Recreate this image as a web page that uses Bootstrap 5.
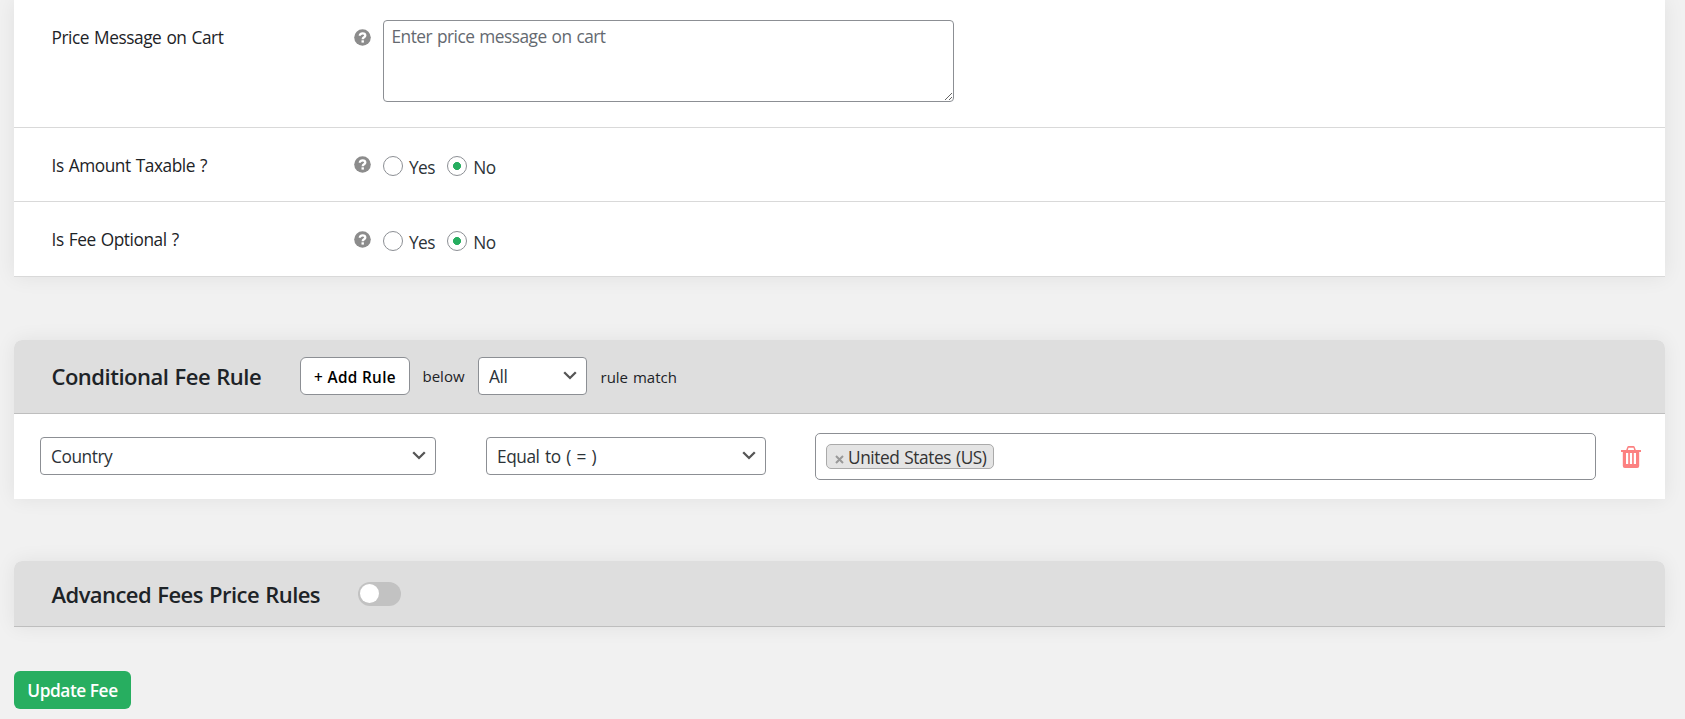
<!DOCTYPE html>
<html lang="en">
<head>
<meta charset="utf-8">
<meta name="viewport" content="width=device-width, initial-scale=1">
<title>Edit fee</title>
<link href="https://cdn.jsdelivr.net/npm/bootstrap@5.3.0/dist/css/bootstrap.min.css" rel="stylesheet">
<style>
  body { background: #f1f1f1; color: #1d2327; font-family: "Open Sans", "Noto Sans", sans-serif; font-size: 17.3px; line-height: 24px; letter-spacing: -.45px; word-spacing: 1px; overflow: hidden; }
  .page { padding: 0 20px 0 14px; }
  .panel { background: #fff; box-shadow: 0 0 20px rgba(0,0,0,.07); }
  .panel-head { background: #dedede; border-bottom: 1px solid #bebebe; border-radius: 8px 8px 0 0; padding-left: 37.5px; }
  .field { border-bottom: 1px solid #d9d9d9; padding-left: 37.5px; }
  .field-label { width: 302.5px; padding-top: 2px; }
  .help { width: 17px; height: 17px; margin-right: 12px; flex: none; }
  .message { width: 571px; height: 82px; padding: 3px 7.5px; border: 1px solid #8c8f94; border-radius: 4px; font-size: 17.3px; line-height: 25px; letter-spacing: -.52px; word-spacing: 1px; }
  .message::placeholder { color: #646970; }
  .choice { color: #2c3338; gap: 6px; }
  .choice span { padding-top: 2px; margin-bottom: -1px; letter-spacing: -.6px; }
  .choice + .choice { margin-left: 12.500px; }
  .choice .form-check-input { width: 20px; height: 20px; margin: 0; border: 1px solid #8c8f94; background-color: #fff; }
  .choice .form-check-input:checked { background-image: radial-gradient(circle, #27ae60 3.7px, transparent 4.3px); }
  .panel-title { font-size: 22px; font-weight: 600; line-height: 30px; letter-spacing: -.5px; margin: 0; }
  .form-select { height: 38px; padding: 3px 30px 0 10px; border: 1px solid #8c8f94; border-radius: 4px; color: #2c3338; font-size: 17.3px; line-height: 24px; letter-spacing: -.45px; word-spacing: 1.500px;
    background: #fff url("data:image/svg+xml,%3Csvg xmlns='http://www.w3.org/2000/svg' viewBox='0 0 14 9'%3E%3Cpath d='M1.2 1.3 7 7l5.800-5.700' fill='none' stroke='%23555' stroke-width='2.300'/%3E%3C/svg%3E") no-repeat right 9px center / 14px 9px; }
  .btn-rule { width: 110px; height: 38px; padding: 3px 0 0; background: #fff; border: 1px solid #8c8f94; border-radius: 6px; color: #000; font-size: 15.3px; font-weight: 600; letter-spacing: .35px; }
  .hint { font-size: 15px; letter-spacing: 0; }
  .values { width: 781px; height: 47px; border: 1px solid #8c8f94; border-radius: 5px; padding-left: 10px; }
  .tag { width: 168px; height: 25px; background: #e4e4e4; border: 1px solid #aaa; border-radius: 5px; color: #333; padding-left: 8px; line-height: 25px; }
  .tag svg { width: 9px; height: 9px; margin-right: 4px; margin-top: 5px; }
  .tag span { padding-top: 2px; letter-spacing: -.45px; }
  .trash { width: 20px; height: 22px; }
  .toggle { width: 43px; height: 24px; border-radius: 12px; background: #c2c2c2; padding: 2px; }
  .knob { width: 19px; height: 19px; border-radius: 50%; background: #fff; }
  .btn-save { width: 117px; height: 38px; padding: 2px 0 0; background: #27ae60; color: #fff; border: 0; border-radius: 6px; font-size: 17.3px; font-weight: 600; letter-spacing: -.45px; }
  .btn-save:hover { background: #219653; color: #fff; }
</style>
</head>
<body>
<svg class="d-none" xmlns="http://www.w3.org/2000/svg">
  <symbol id="help" viewBox="0 0 17 17"><circle cx="8.500" cy="8.500" r="8.300" fill="#8c8c8c"/><path d="M5.800 6.700C5.800 3.600 11.300 3.800 11.300 6.600 11.300 8.400 8.700 8.200 8.700 10.300" fill="none" stroke="#fff" stroke-width="2.300"/><rect x="7.500" y="11.300" width="2.400" height="2.300" fill="#fff"/></symbol>
</svg>
<main class="page">
  <section class="panel">
    <div class="field d-flex align-items-start" style="height:128px">
      <div class="field-label" style="padding-top:26px"><label for="msg" class="d-block">Price Message on Cart</label></div>
      <svg class="help" style="margin-top:29px"><use href="#help"/></svg>
      <textarea id="msg" class="message form-control" style="margin-top:20px" placeholder="Enter price message on cart"></textarea>
    </div>
    <div class="field d-flex align-items-center" style="height:74px">
      <div class="field-label">Is Amount Taxable ?</div>
      <svg class="help"><use href="#help"/></svg>
      <div class="d-flex" style="padding-top:3px">
        <label class="choice d-flex align-items-center"><input class="form-check-input" type="radio" name="tax"><span>Yes</span></label>
        <label class="choice d-flex align-items-center"><input class="form-check-input" type="radio" name="tax" checked><span>No</span></label>
      </div>
    </div>
    <div class="field d-flex align-items-center" style="height:75px">
      <div class="field-label">Is Fee Optional ?</div>
      <svg class="help"><use href="#help"/></svg>
      <div class="d-flex pt-1">
        <label class="choice d-flex align-items-center"><input class="form-check-input" type="radio" name="opt"><span>Yes</span></label>
        <label class="choice d-flex align-items-center"><input class="form-check-input" type="radio" name="opt" checked><span>No</span></label>
      </div>
    </div>
  </section>

  <section class="panel rounded-top-3" style="margin-top:63px">
    <div class="panel-head d-flex align-items-center" style="height:74px;padding-bottom:2px">
      <h2 class="panel-title" style="width:248.5px">Conditional Fee Rule</h2>
      <button class="btn btn-rule" type="button">+ Add Rule</button>
      <span class="hint" style="width:68px;padding-left:12.5px">below</span>
      <select class="form-select" style="width:109px" aria-label="Match"><option>All</option><option>Any</option></select>
      <span class="hint" style="padding:2px 0 0 13.5px">rule match</span>
    </div>
    <div class="d-flex align-items-center" style="height:85px;padding-left:26px">
      <select class="form-select" style="width:396px;margin:0 50px 2px 0" aria-label="Condition"><option>Country</option></select>
      <select class="form-select" style="width:280px;margin:0 49px 2px 0" aria-label="Operator"><option>Equal to ( = )</option></select>
      <div class="values d-flex align-items-center">
        <span class="tag d-flex align-items-center"><svg viewBox="0 0 9 9"><path d="M1 1l7 7M8 1 1 8" stroke="#999" stroke-width="2"/></svg><span>United States (US)</span></span>
      </div>
      <svg class="trash" style="margin-left:25px" viewBox="0 0 20 22" fill="#fc8181"><path d="M0 4h20v2H0zM5 4.500 6.300 1Q6.600 0 7.600 0h4.800q1 0 1.300 1L15 4.500h-1.700L12.500 1.700h-5L6.700 4.500z"/><path fill-rule="evenodd" d="M1.800 5h16.400v15q0 2-2 2H3.800q-2 0-2-2zM5 7v11h2.200V7zM8.900 7v11h2.200V7zM12.800 7v11H15V7z"/></svg>
    </div>
  </section>

  <section class="panel rounded-top-3" style="margin-top:62px">
    <div class="panel-head d-flex align-items-center" style="height:66px">
      <h2 class="panel-title" style="width:306.5px;letter-spacing:-.55px">Advanced Fees Price Rules</h2>
      <div class="toggle" role="switch" aria-checked="false"><div class="knob"></div></div>
    </div>
  </section>

  <button class="btn btn-save d-block" style="margin-top:44px" type="button">Update Fee</button>
</main>
<script src="https://cdn.jsdelivr.net/npm/bootstrap@5.3.0/dist/js/bootstrap.bundle.min.js"></script>
</body>
</html>
